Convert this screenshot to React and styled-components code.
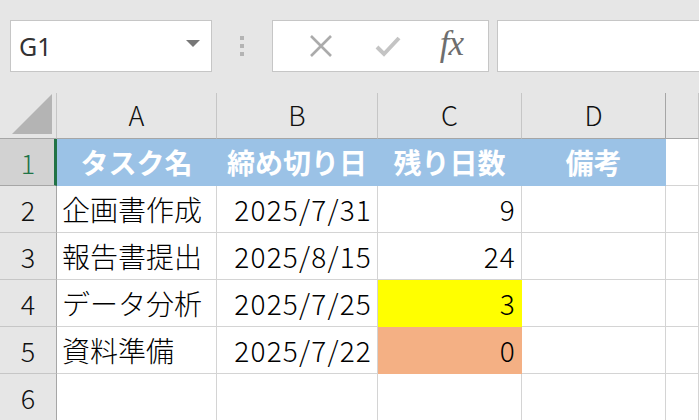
import React from "react";
import styled, { createGlobalStyle } from "styled-components";

const Global = createGlobalStyle`
  html, body { margin: 0; padding: 0; background: #e6e6e6; }
  body { font-family: "Noto Sans CJK JP", "Noto Sans", sans-serif; overflow: hidden; }
`;

const Page = styled.div`
  width: 699px;
  height: 420px;
  display: flex;
  flex-direction: column;
  overflow: hidden;
  background: #e6e6e6;
`;

const Toolbar = styled.div`
  height: 93px;
  box-sizing: border-box;
  padding: 20px 0 0 10px;
  display: flex;
  align-items: flex-start;
  flex-shrink: 0;
`;

const NameBox = styled.div`
  width: 202px;
  height: 52px;
  box-sizing: border-box;
  background: #fff;
  border: 1px solid #c6c6c6;
  display: flex;
  align-items: center;
  justify-content: space-between;
  padding: 0 11px 0 8px;
  font-family: "Noto Sans", "Liberation Sans", sans-serif;
  font-size: 25px;
  color: #333;
`;

const Caret = styled.div`
  width: 0;
  height: 0;
  border-left: 7px solid transparent;
  border-right: 7px solid transparent;
  border-top: 7px solid #777;
  margin-top: -6px;
`;

const Grip = styled.div`
  width: 60px;
  height: 52px;
  display: flex;
  flex-direction: column;
  align-items: center;
  justify-content: flex-start;
  padding-top: 16px;
  box-sizing: border-box;
  gap: 4px;
`;

const GripDot = styled.span`
  width: 4px;
  height: 4px;
  background: #b4b4b4;
`;

const ButtonGroup = styled.div`
  width: 217px;
  height: 52px;
  box-sizing: border-box;
  background: #fff;
  border: 1px solid #c6c6c6;
  display: flex;
  align-items: center;
  padding-left: 14px;
`;

const ToolButton = styled.div`
  width: 72px;
  height: 50px;
  display: flex;
  align-items: center;
  justify-content: center;
`;

const Fx = styled.span`
  font-family: "Liberation Serif", "DejaVu Serif", serif;
  font-style: italic;
  font-size: 35px;
  color: #6e6e6e;
  margin-top: -4px;
  margin-left: -6px;
  letter-spacing: -1px;
`;

const FormulaInput = styled.div`
  flex: 1;
  margin-left: 8px;
  height: 52px;
  box-sizing: border-box;
  background: #fff;
  border: 1px solid #c6c6c6;
  border-right: none;
`;

const Sheet = styled.div`
  flex: 1;
  display: grid;
  grid-template-columns: 57px 160px 161px 144px 144px 1fr;
  grid-template-rows: 46px repeat(6, 47px);
  background: #fff;
`;

const Corner = styled.div`
  background: #e6e6e6;
  border-right: 1px solid #c6c6c6;
  border-bottom: 1px solid #a6a6a6;
  box-sizing: border-box;
  display: flex;
  align-items: flex-end;
  justify-content: flex-end;
  padding: 0 4px 4px 0;
`;

const ColHead = styled.div`
  background: #e6e6e6;
  box-sizing: border-box;
  border-right: 1px solid ${(p) => (p.$dark ? "#a6a6a6" : "#c6c6c6")};
  border-bottom: 1px solid #a6a6a6;
  display: flex;
  align-items: center;
  justify-content: center;
  font-size: 27px;
  font-weight: 300;
  color: #111;
  padding-bottom: 2px;
`;

const RowHead = styled.div`
  box-sizing: border-box;
  background: ${(p) => (p.$active ? "#d2d2d2" : "#e6e6e6")};
  border-right: ${(p) => (p.$active ? "3px solid #217346" : "1px solid #a6a6a6")};
  border-bottom: 1px solid ${(p) => (p.$active ? "#a6a6a6" : "#c6c6c6")};
  display: flex;
  align-items: center;
  justify-content: center;
  font-size: 27px;
  font-weight: 300;
  color: ${(p) => (p.$active ? "#217346" : "#111")};
  padding-left: ${(p) => (p.$active ? "2px" : "0")};
`;

const Cell = styled.div`
  box-sizing: border-box;
  background: ${(p) => p.$fill || "#fff"};
  border-right: 1px solid ${(p) => p.$fill || "#d4d4d4"};
  border-bottom: 1px solid ${(p) => p.$fill || "#d4d4d4"};
  display: flex;
  align-items: center;
  justify-content: ${(p) =>
    p.$align === "right" ? "flex-end" : p.$align === "center" ? "center" : "flex-start"};
  padding: 0 5px 1px 5px;
  font-size: 28px;
  font-weight: ${(p) => (p.$bold ? 700 : 300)};
  color: ${(p) => (p.$bold ? "#fff" : "#000")};
  white-space: nowrap;
  overflow: hidden;
`;

const Num = styled.span`
  letter-spacing: 1.2px;
`;

const HEAD_BLUE = "#9bc2e6";

const rows = [
  { n: 2, task: "企画書作成", date: "2025/7/31", days: "9" },
  { n: 3, task: "報告書提出", date: "2025/8/15", days: "24" },
  { n: 4, task: "データ分析", date: "2025/7/25", days: "3", fill: "#ffff00" },
  { n: 5, task: "資料準備", date: "2025/7/22", days: "0", fill: "#f4b084" },
];

export default function App() {
  return (
    <Page>
      <Global />
      <Toolbar>
        <NameBox>
          <span>G1</span>
          <Caret />
        </NameBox>
        <Grip>
          <GripDot />
          <GripDot />
          <GripDot />
        </Grip>
        <ButtonGroup>
          <ToolButton>
            <svg width="24" height="24" viewBox="0 0 24 24">
              <path d="M2 2 L22 22 M22 2 L2 22" stroke="#ababab" strokeWidth="2.6" fill="none" />
            </svg>
          </ToolButton>
          <ToolButton>
            <svg width="26" height="22" viewBox="0 0 26 22">
              <path d="M2 12 L9 19 L24 3" stroke="#c4c4c4" strokeWidth="4" fill="none" />
            </svg>
          </ToolButton>
          <ToolButton>
            <Fx>fx</Fx>
          </ToolButton>
        </ButtonGroup>
        <FormulaInput />
      </Toolbar>
      <Sheet>
        <Corner>
          <svg width="40" height="40" viewBox="0 0 40 40">
            <polygon points="40,0 40,40 0,40" fill="#b4b4b4" />
          </svg>
        </Corner>
        <ColHead>A</ColHead>
        <ColHead>B</ColHead>
        <ColHead>C</ColHead>
        <ColHead $dark>D</ColHead>
        <ColHead />

        <RowHead $active>1</RowHead>
        <Cell $fill={HEAD_BLUE} $bold $align="center">タスク名</Cell>
        <Cell $fill={HEAD_BLUE} $bold $align="center">締め切り日</Cell>
        <Cell $fill={HEAD_BLUE} $bold $align="center">残り日数</Cell>
        <Cell $fill={HEAD_BLUE} $bold $align="center">備考</Cell>
        <Cell />

        {rows.map((r) => (
          <React.Fragment key={r.n}>
            <RowHead>{r.n}</RowHead>
            <Cell>{r.task}</Cell>
            <Cell $align="right"><Num>{r.date}</Num></Cell>
            <Cell $align="right" $fill={r.fill}><Num>{r.days}</Num></Cell>
            <Cell />
            <Cell />
          </React.Fragment>
        ))}

        <RowHead>6</RowHead>
        <Cell />
        <Cell />
        <Cell />
        <Cell />
        <Cell />
      </Sheet>
    </Page>
  );
}
